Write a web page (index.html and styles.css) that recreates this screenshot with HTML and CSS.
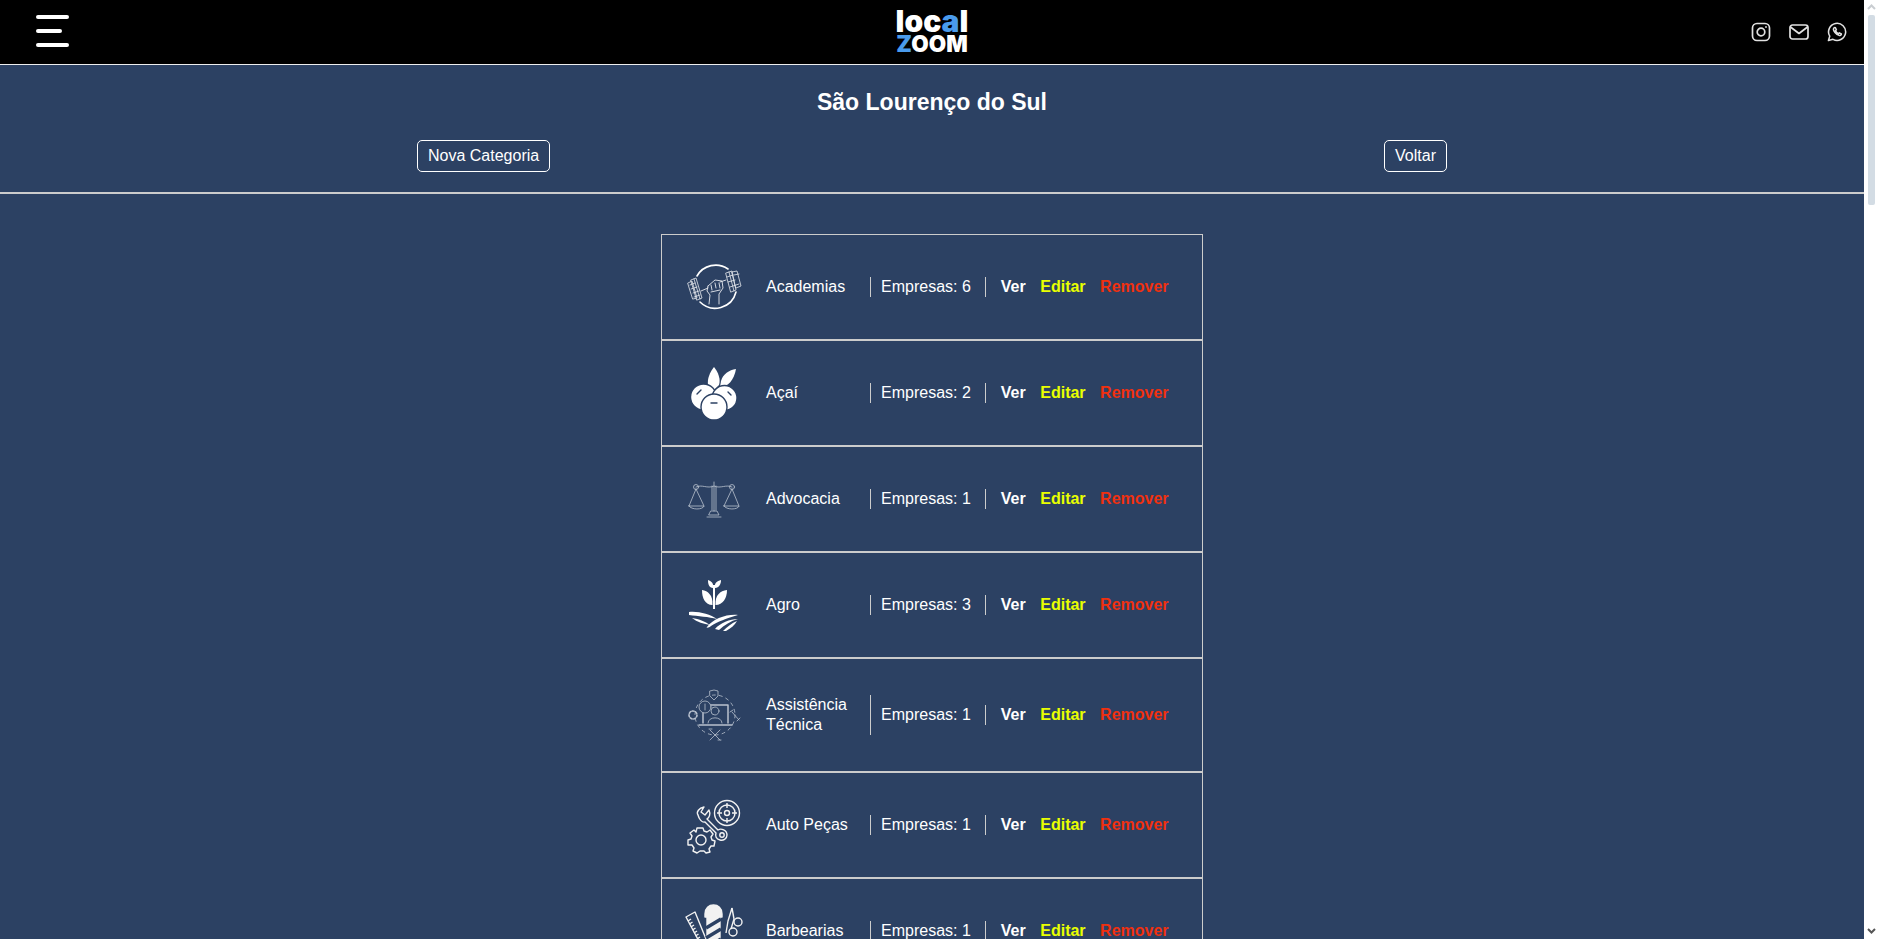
FILE: index.html
```html
<!DOCTYPE html>
<html lang="pt-BR">

<head>
    <meta charset="UTF-8">
    <meta name="viewport" content="width=device-width, initial-scale=1.0">
    <title>Local Zoom</title>
    <link rel="stylesheet" href="styles.css">
</head>

<body>
    <div class="page">
        <header class="topbar">
            <a class="menu-btn" href="#" aria-label="Menu">
                <span class="menu-line"></span>
                <span class="menu-line menu-line-short"></span>
                <span class="menu-line"></span>
            </a>
            <a class="logo" href="#">
                <span class="logo-top">loc<b>a</b>l</span>
                <span class="logo-bottom"><b>Z</b>OOM</span>
            </a>
            <div class="social">
                <svg class="social-icon" width="20" height="20" viewBox="0 0 20 20">
                    <rect x="1.5" y="1.5" width="17" height="17" rx="4.5" />
                    <circle cx="10" cy="10" r="3.8" />
                    <circle class="solid" cx="15" cy="5" r="0.9" />
                </svg>
                <svg class="social-icon" width="20" height="16" viewBox="0 0 20 16">
                    <rect x="1" y="1" width="18" height="14" rx="2.5" />
                    <path d="M1.5 3 L10 9.5 L18.5 3" />
                </svg>
                <svg class="social-icon" width="20" height="20" viewBox="0 0 22 22">
                    <path d="M1.6 20.4 L3 15.6 A9.4 9.4 0 1 1 6.6 19.1 Z" />
                    <path d="M7.8 6.4 C6.8 7.4 7 9.4 8.8 11.6 C10.8 14 13.4 15.4 14.8 14.6 C15.6 14.1 15.9 13.4 15.8 13 L13.6 11.9 L12.7 12.9 C11.4 12.4 10 11 9.4 9.6 L10.3 8.6 L9.3 6.3 C8.8 6.1 8.2 6.1 7.8 6.4 Z" />
                </svg>
            </div>
        </header>

        <section class="city-head">
            <h1 class="city-name">São Lourenço do Sul</h1>
            <div class="city-actions">
                <a class="btn" href="#">Nova Categoria</a>
                <a class="btn" href="#">Voltar</a>
            </div>
        </section>

        <main class="category-list">
            <div class="category-row">
                <svg class="category-icon thin" viewBox="0 0 64 64">
                    <path class="ring" d="M15 21 A21.5 21.5 0 0 1 46 14 M54 37 A21.5 21.5 0 0 1 18 47" />
                    <g class="plates">
                        <path d="M9 25 L14 23 L20 43 L15 45 Z" />
                        <path d="M6 28 L10 26 L15 43 L11 44 Z" />
                        <path d="M12 24 L18 44 M8 30 L13 28 M9 34 L15 32 M11 38 L17 36 M12 42 L18 40" />
                        <path d="M44 18 L50 16 L54 35 L49 37 Z" />
                        <path d="M50 17 L55 16 L59 31 L54 33 Z" />
                        <path d="M47 17 L52 36 M45 22 L51 20 M46 27 L53 25 M48 32 L57 29 M52 20 L57 19" />
                    </g>
                    <path d="M19 36 L26 33 M38 27 L44 25" />
                    <path d="M26 31 L33 25 L40 26 L41 33 L37 39 L37 49 M26 31 L25 36 L28 40 L27 49 M29 30 L30 35 M33 28 L34 33 M37 28 L38 33 M29 37 L38 35" />
                </svg>
                <div class="category-name">Academias</div>
                <div class="category-count">Empresas: 6</div>
                <div class="category-links">
                    <a class="link-view" href="#">Ver</a>
                    <a class="link-edit" href="#">Editar</a>
                    <a class="link-remove" href="#">Remover</a>
                </div>
            </div>

            <div class="category-row">
                <svg class="category-icon filled" viewBox="0 0 64 64">
                    <path d="M32 6 C28 11 25 18 26 24 L32 29 L37 24 C39 18 36 11 32 6 Z" />
                    <path d="M54 8 C47 9 41 13 39 20 L38 26 C46 26 52 19 54 8 Z" />
                    <circle class="edge" cx="21.5" cy="36" r="13" />
                    <circle class="edge" cx="42.5" cy="37" r="12.5" />
                    <circle class="edge" cx="32" cy="46" r="13" />
                    <path class="cut" d="M15 33 L19 29 M46 31 L49 34 M29 42 L35 42" />
                </svg>
                <div class="category-name">Açaí</div>
                <div class="category-count">Empresas: 2</div>
                <div class="category-links">
                    <a class="link-view" href="#">Ver</a>
                    <a class="link-edit" href="#">Editar</a>
                    <a class="link-remove" href="#">Remover</a>
                </div>
            </div>

            <div class="category-row">
                <svg class="category-icon thin faded" viewBox="0 0 64 64">
                    <path d="M14 20 C20 17 25 22 32 19 C39 22 44 17 50 20" />
                    <circle cx="14" cy="20" r="2.5" />
                    <circle cx="50" cy="20" r="2.5" />
                    <path d="M32 15 L32 44 M30 19 L30 43 M34 19 L34 43" />
                    <path d="M14 22 L7 39 M14 22 L22 39 M50 22 L42 39 M50 22 L57 39" />
                    <path d="M7 39 L22 39 C21 43 9 43 7 39 Z M42 39 L57 39 C56 43 44 43 42 39 Z" />
                    <path d="M29 44 L35 44 L37 48 L27 48 Z M25 50 L39 50" />
                </svg>
                <div class="category-name">Advocacia</div>
                <div class="category-count">Empresas: 1</div>
                <div class="category-links">
                    <a class="link-view" href="#">Ver</a>
                    <a class="link-edit" href="#">Editar</a>
                    <a class="link-remove" href="#">Remover</a>
                </div>
            </div>

            <div class="category-row">
                <svg class="category-icon filled" viewBox="0 0 64 64">
                    <path d="M31 12 L33 12 L33 36 L31 36 Z" />
                    <path d="M30.5 32 C23 32 20 25 20 17 C26 18 31 22 30.5 32 Z" />
                    <path d="M33.5 32 C41 32 45 25 45 17 C38 18 33 22 33.5 32 Z" />
                    <path d="M31 15 C27 15 26 11 26 7 C29 8 32 10 31 15 Z" />
                    <path d="M33 15 C37 15 39 11 39 7 C35 8 32 10 33 15 Z" />
                    <path d="M7 39 C16 38 28 41 35 46 C27 44 16 43 7 42 Z" />
                    <path d="M10 45 C17 46 24 49 28 52 C22 51 15 49 10 45 Z" />
                    <path d="M56 42 C44 41 31 46 25 54 C24 55 27 55 29 53 C35 49 45 45 56 42 Z" />
                    <path d="M56 46 C48 46 38 50 33 56 L37 57 C42 52 49 48 56 46 Z" />
                    <path d="M55 48 C50 50 45 54 41 58 L44 58 C49 55 53 52 55 48 Z" />
                </svg>
                <div class="category-name">Agro</div>
                <div class="category-count">Empresas: 3</div>
                <div class="category-links">
                    <a class="link-view" href="#">Ver</a>
                    <a class="link-edit" href="#">Editar</a>
                    <a class="link-remove" href="#">Remover</a>
                </div>
            </div>

            <div class="category-row">
                <svg class="category-icon thin faded" viewBox="0 0 64 64">
                    <circle class="dashed" cx="33" cy="32" r="20" />
                    <path d="M28 8 L32 7 L36 8 L36 13 L32 17 L28 13 Z" />
                    <path class="bold" d="M21 40 L21 22 L46 22 L46 40 M17 42 L50 42" />
                    <circle cx="33" cy="28" r="4" />
                    <path d="M26 40 C26 33 40 33 40 40" />
                    <circle class="navy-fill" cx="23" cy="24" r="6" />
                    <path d="M23 21 L23 27" />
                    <circle class="dashed-small" cx="11" cy="32" r="4" />
                    <path d="M50 29 L57 37 M48 29 L51 27 M55 38 L58 35" />
                    <path d="M28 47 L38 57 M38 47 L28 57 M27 46 L30 46 M36 57 L39 57" />
                </svg>
                <div class="category-name">Assistência Técnica</div>
                <div class="category-count">Empresas: 1</div>
                <div class="category-links">
                    <a class="link-view" href="#">Ver</a>
                    <a class="link-edit" href="#">Editar</a>
                    <a class="link-remove" href="#">Remover</a>
                </div>
            </div>

            <div class="category-row">
                <svg class="category-icon medium" viewBox="0 0 64 64">
                    <circle cx="45" cy="20" r="12.5" />
                    <circle cx="45" cy="20" r="8" />
                    <circle cx="45" cy="20" r="2.5" />
                    <path d="M45 10 L45 15 M45 25 L45 30 M35 20 L40 20 M50 20 L55 20" />
                    <path d="M16 22 C14 19 17 15 22 14 L19 19 L23 22 L27 17 C29 21 27 25 25 26 L36 37 C39 35 45 37 45 42 C45 46 41 48 38 47 C34 46 33 43 34 40 L23 29 C20 30 17 26 16 22 Z" />
                    <circle cx="40" cy="42" r="2.2" />
                    <path d="M15 35 L21 35 L22 38 L25 39 L28 37 L31 41 L29 44 L30 47 L33 48 L32 53 L29 53 L27 56 L28 59 L24 60 L22 58 L18 58 L15 60 L11 58 L12 55 L10 52 L6 52 L6 47 L9 46 L10 43 L8 40 L12 37 L14 39 Z" />
                    <circle cx="19" cy="47" r="5" />
                </svg>
                <div class="category-name">Auto Peças</div>
                <div class="category-count">Empresas: 1</div>
                <div class="category-links">
                    <a class="link-view" href="#">Ver</a>
                    <a class="link-edit" href="#">Editar</a>
                    <a class="link-remove" href="#">Remover</a>
                </div>
            </div>

            <div class="category-row">
                <svg class="category-icon medium" viewBox="0 0 64 64">
                    <path d="M4 18 L13 13 L24 40 L19 46 Z" />
                    <path d="M6 22 L9 20 M7.5 25 L10.5 23 M9 28 L12 26 M10.5 31 L13.5 29 M12 34 L15 32 M13.5 37 L16.5 35 M15 40 L18 38" />
                    <path class="white-fill" d="M23 15 C23 9 27 6 31.5 6 C36 6 40 9 40 15 L40 18 L23 18 Z" />
                    <path class="white-fill" d="M25 18 L25 64 L38 64 L38 18 Z" />
                    <path class="stripe" d="M24 29 L39 20 M24 39 L39 30 M24 49 L39 40 M24 59 L39 50" />
                    <path d="M50 9 L46 22 L44 34 M50 9 L52 20 L49 30" />
                    <circle cx="56" cy="23" r="4" />
                    <circle cx="51" cy="33" r="4" />
                </svg>
                <div class="category-name">Barbearias</div>
                <div class="category-count">Empresas: 1</div>
                <div class="category-links">
                    <a class="link-view" href="#">Ver</a>
                    <a class="link-edit" href="#">Editar</a>
                    <a class="link-remove" href="#">Remover</a>
                </div>
            </div>
        </main>
    </div>

    <div class="scrollbar">
        <svg class="scroll-arrow scroll-arrow-up" width="9" height="6" viewBox="0 0 9 6">
            <path d="M1 5 L4.5 1.5 L8 5" />
        </svg>
        <span class="scroll-thumb"></span>
        <svg class="scroll-arrow scroll-arrow-down" width="9" height="6" viewBox="0 0 9 6">
            <path d="M1 1 L4.5 4.5 L8 1" />
        </svg>
    </div>
</body>

</html>
```

FILE: styles.css
```css
* {
    box-sizing: border-box;
}

html,
body {
    height: 100%;
}

body {
    margin: 0;
    display: flex;
    overflow: hidden;
    background: #fff;
    color: #fff;
    font-family: "Liberation Sans", Arial, sans-serif;
    font-size: 16px;
    line-height: 20px;
}

a {
    color: inherit;
    text-decoration: none;
}

.page {
    flex: 1;
    height: 100vh;
    overflow: hidden;
    background: #2c4163;
}

/* top bar */
.topbar {
    height: 65px;
    display: grid;
    grid-template-columns: 1fr auto 1fr;
    align-items: center;
    padding: 0 17px 0 36px;
    background: #000;
    border-bottom: 1px solid #eee;
}

.menu-btn {
    display: flex;
    flex-direction: column;
    gap: 10px;
    width: 33px;
    margin-bottom: 2px;
}

.menu-line {
    height: 4px;
    border-radius: 2px;
    background: #fff;
}

.menu-line-short {
    width: 26px;
}

.logo {
    display: flex;
    flex-direction: column;
    align-items: center;
    width: 72px;
    margin: 0 19px 2px 0;
    font-family: "Inter", sans-serif;
    font-weight: 900;
}

.logo b {
    color: #4a9bec;
    font-weight: 900;
}

.logo-top {
    font-size: 30px;
    line-height: 26px;
}

.logo-bottom {
    font-size: 22.5px;
    line-height: 20px;
}

.social {
    justify-self: end;
    display: flex;
    align-items: center;
    gap: 18px;
}

.social-icon {
    fill: none;
    stroke: #e2e2e2;
    stroke-width: 1.7;
    stroke-linejoin: round;
}

.social-icon .solid {
    fill: #e2e2e2;
    stroke: none;
}

/* city header */
.city-head {
    padding: 24px 0 20px;
    border-bottom: 2px solid #ccc;
}

.city-name {
    margin: 0 0 24px;
    font-size: 23px;
    line-height: 27px;
    font-weight: 700;
    text-align: center;
}

.city-actions {
    width: 1030px;
    margin: 0 auto;
    display: flex;
    justify-content: space-between;
}

.btn {
    padding: 5px 10px;
    border: 1px solid #fff;
    border-radius: 5px;
}

/* list */
.category-list {
    width: 542px;
    margin: 40px auto 0;
}

.category-row {
    display: flex;
    align-items: center;
    padding-left: 20px;
    border: 1px solid #ccc;
}

.category-icon {
    flex: none;
    width: 64px;
    height: 64px;
    margin: 20px 20px 20px 0;
}

.category-name {
    width: 105px;
    margin: 36px 0;
    padding-right: 10px;
    border-right: 1px solid #ccc;
}

.category-count {
    padding: 0 14px 0 10px;
    border-right: 1px solid #ccc;
    white-space: nowrap;
}

.category-links {
    display: flex;
    gap: 14.5px;
    padding-left: 15px;
    font-weight: 700;
}

.link-edit {
    color: #e9ff00;
}

.link-remove {
    color: #f0300f;
}

/* icon drawing */
.category-icon.thin {
    fill: none;
    stroke: #e6e9ee;
    stroke-width: 0.9;
    stroke-linejoin: round;
    stroke-linecap: round;
}

.category-icon.faded {
    stroke: #b9c1ce;
    stroke-width: 0.8;
}

.category-icon.medium {
    fill: none;
    stroke: #f2f2f2;
    stroke-width: 1.4;
    stroke-linejoin: round;
}

.category-icon.filled {
    fill: #fff;
    stroke: none;
}

.category-icon .ring {
    stroke: #fff;
    stroke-width: 1.6;
}

.category-icon .plates {
    stroke-width: 0.8;
}

.category-icon .edge {
    stroke: #2c4163;
    stroke-width: 1.4;
}

.category-icon .cut {
    fill: none;
    stroke: #2c4163;
    stroke-width: 1.4;
    stroke-linecap: round;
}

.category-icon .dashed {
    stroke-dasharray: 3 4;
}

.category-icon .dashed-small {
    stroke-dasharray: 2 1.5;
    stroke-width: 1.6;
}

.category-icon .bold {
    stroke-width: 1.5;
}

.category-icon .navy-fill {
    fill: #2c4163;
}

.category-icon .white-fill {
    fill: #f2f2f2;
}

.category-icon .stripe {
    stroke: #2c4163;
    stroke-width: 3.5;
}

/* scrollbar */
.scrollbar {
    flex: none;
    width: 15px;
    height: 100vh;
    display: flex;
    flex-direction: column;
    align-items: center;
    padding: 4px 0;
    background: #fff;
}

.scroll-thumb {
    width: 7px;
    height: 190px;
    margin-top: 5px;
    border-radius: 2px;
    background: #d3dce4;
}

.scroll-arrow {
    flex: none;
    fill: none;
    stroke-width: 2;
}

.scroll-arrow-up {
    stroke: #c9cdd1;
}

.scroll-arrow-down {
    margin-top: auto;
    margin-bottom: 1px;
    stroke: #555;
}
```
